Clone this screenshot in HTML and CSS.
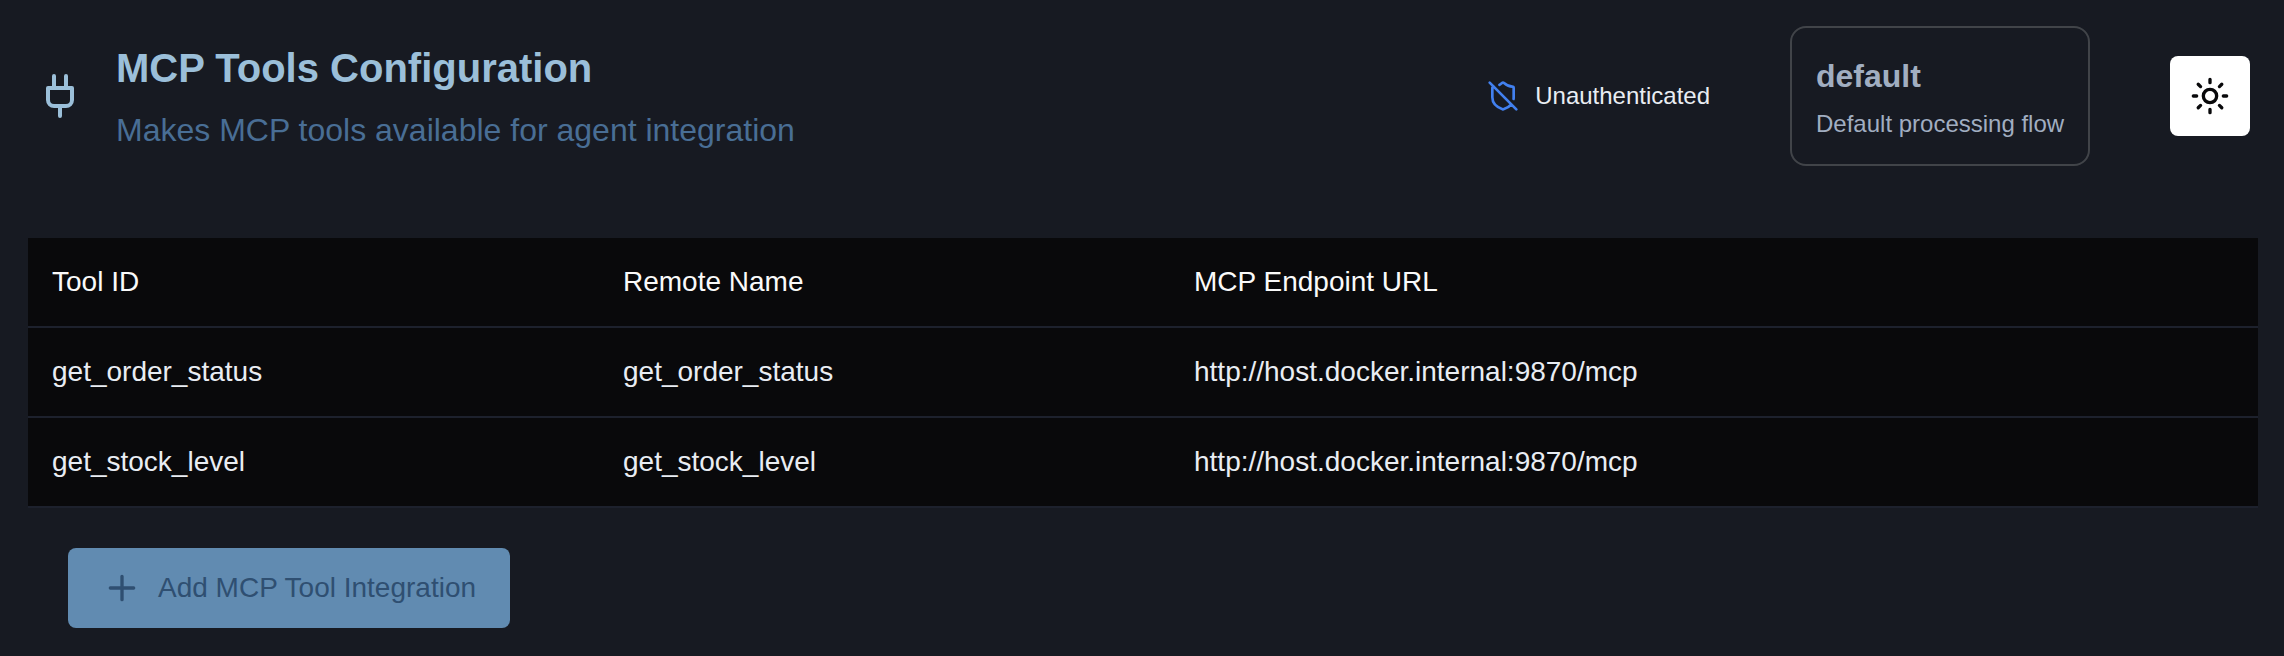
FILE: index.html
```html
<!DOCTYPE html>
<html lang="en">
<head>
<meta charset="utf-8">
<title>MCP Tools Configuration</title>
<link rel="stylesheet" href="styles.css">
</head>
<body>
<header class="header">
  <svg class="icon plug" viewBox="0 0 24 24"><path d="M12 22v-5M9 8V2M15 8V2M18 8v6a3 3 0 0 1-3 3H9a3 3 0 0 1-3-3V8Z"/></svg>
  <div class="heading">
    <h1 class="title">MCP Tools Configuration</h1>
    <p class="subtitle">Makes MCP tools available for agent integration</p>
  </div>
  <div class="auth">
    <svg class="icon shield" viewBox="0 0 24 24"><path d="m2 2 20 20M5 5a1 1 0 0 0-1 1v7c0 5 3.5 7.5 7.67 8.94a1 1 0 0 0 .67.01c2.35-.82 4.48-1.97 5.9-3.71M9.309 3.652A12.252 12.252 0 0 0 11.24 2.28a1.17 1.17 0 0 1 1.52 0C14.51 3.81 17 5 19 5a1 1 0 0 1 1 1v7a9.784 9.784 0 0 1-.08 1.264"/></svg>
    <span class="auth-label">Unauthenticated</span>
  </div>
  <div class="flow">
    <strong class="flow-name">default</strong>
    <span class="flow-desc">Default processing flow</span>
  </div>
  <button class="theme" aria-label="Toggle theme">
    <svg class="icon sun" viewBox="0 0 24 24"><circle cx="12" cy="12" r="4"/><path d="M12 2v2M12 20v2m-7.07-17.07 1.41 1.41m11.32 11.32 1.41 1.41M2 12h2m16 0h2M6.34 17.66l-1.41 1.41M19.07 4.93l-1.41 1.41"/></svg>
  </button>
</header>
<main class="main">
  <table class="tools">
    <thead>
      <tr><th>Tool ID</th><th>Remote Name</th><th>MCP Endpoint URL</th></tr>
    </thead>
    <tbody>
      <tr><td>get_order_status</td><td>get_order_status</td><td>http://host.docker.internal:9870/mcp</td></tr>
      <tr><td>get_stock_level</td><td>get_stock_level</td><td>http://host.docker.internal:9870/mcp</td></tr>
    </tbody>
  </table>
  <button class="add">
    <svg class="icon plus" viewBox="0 0 24 24"><path d="M5 12h14M12 5v14"/></svg>
    <span>Add MCP Tool Integration</span>
  </button>
</main>
</body>
</html>
```

FILE: styles.css
```css
* { box-sizing: border-box; }
body {
  margin: 0;
  height: 656px;
  overflow: hidden;
  background: #171a22;
  color: #e9edf3;
  font-family: "Liberation Sans", Arial, sans-serif;
  font-size: 28px;
}
.icon {
  flex: none;
  fill: none;
  stroke: currentColor;
  stroke-width: 2;
  stroke-linecap: round;
  stroke-linejoin: round;
}
.header {
  display: flex;
  align-items: center;
  height: 192px;
  padding: 0 34px 0 36px;
}
.plug { width: 48px; height: 48px; color: #9bbfd9; }
.heading { margin: 0 auto 0 32px; }
.title {
  margin: 0;
  color: #9bbfd9;
  font-size: 40px;
  line-height: 60px;
  font-weight: 700;
}
.subtitle {
  margin: 8px 0 0;
  color: #496e95;
  font-size: 32px;
  line-height: 48px;
}
.auth { display: flex; align-items: center; gap: 16px; margin-right: 80px; }
.shield { width: 32px; height: 32px; color: #4280ef; }
.auth-label { font-size: 24px; line-height: 36px; }
.flow {
  display: flex;
  flex-direction: column;
  width: 300px;
  height: 140px;
  margin-right: 80px;
  padding: 24px 24px 0;
  border: 2px solid #414449;
  border-radius: 16px;
  color: #a1aec1;
  white-space: nowrap;
}
.flow-name { font-size: 32px; line-height: 48px; }
.flow-desc { margin-top: 6px; font-size: 24px; line-height: 36px; }
.theme {
  display: grid;
  place-items: center;
  width: 80px;
  height: 80px;
  padding: 0;
  border: 0;
  border-radius: 8px;
  background: #fff;
  color: #09090b;
}
.sun, .plus { width: 40px; height: 40px; }
.main { padding: 46px 26px 0 28px; }
.tools {
  width: 100%;
  table-layout: fixed;
  border-collapse: separate;
  border-spacing: 0;
  background: #09090b;
}
.tools th, .tools td {
  height: 90px;
  padding: 0 24px;
  border-bottom: 2px solid #1d212d;
  text-align: left;
  font-weight: 400;
}
.tools th { color: #fafafa; }
.tools th:nth-child(1), .tools th:nth-child(2) { width: 571px; }
.add {
  display: flex;
  align-items: center;
  gap: 16px;
  width: 442px;
  height: 80px;
  margin: 40px 0 0 40px;
  padding: 0 0 0 34px;
  border: 0;
  border-radius: 8px;
  background: #618bb1;
  color: #2f4f71;
  font: inherit;
  white-space: nowrap;
}
```
